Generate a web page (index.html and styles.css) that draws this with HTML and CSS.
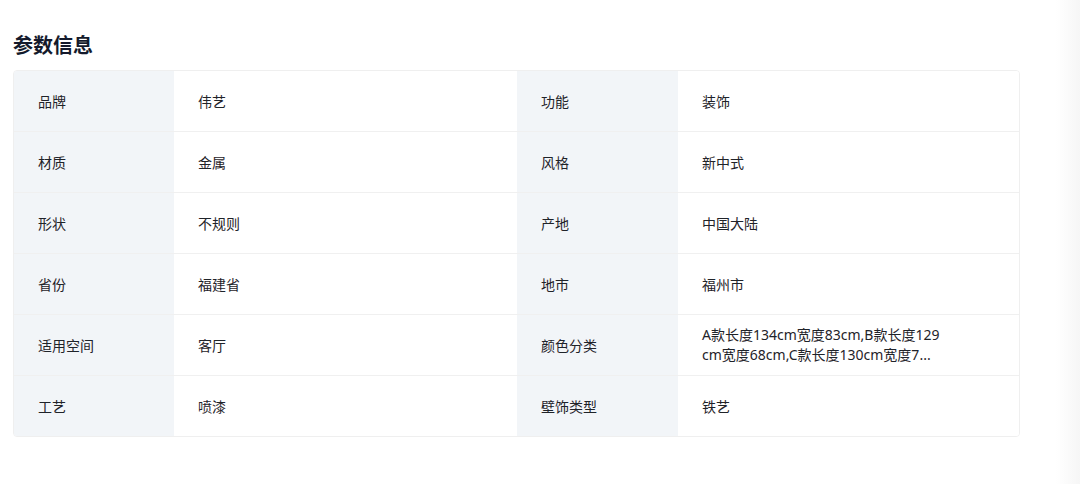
FILE: index.html
```html
<!DOCTYPE html>
<html lang="zh">
<head>
<meta charset="utf-8">
<link rel="stylesheet" href="styles.css">
</head>
<body>
<div class="page">
  <h2 class="title">参数信息</h2>
  <div class="params">
    <div class="row">
      <div class="label">品牌</div><div class="value">伟艺</div>
      <div class="label">功能</div><div class="value">装饰</div>
    </div>
    <div class="row">
      <div class="label">材质</div><div class="value">金属</div>
      <div class="label">风格</div><div class="value">新中式</div>
    </div>
    <div class="row">
      <div class="label">形状</div><div class="value">不规则</div>
      <div class="label">产地</div><div class="value">中国大陆</div>
    </div>
    <div class="row">
      <div class="label">省份</div><div class="value">福建省</div>
      <div class="label">地市</div><div class="value">福州市</div>
    </div>
    <div class="row">
      <div class="label">适用空间</div><div class="value">客厅</div>
      <div class="label">颜色分类</div><div class="value"><span class="clamp">A款长度134cm宽度83cm,B款长度129cm宽度68cm,C款长度130cm宽度7...</span></div>
    </div>
    <div class="row">
      <div class="label">工艺</div><div class="value">喷漆</div>
      <div class="label">壁饰类型</div><div class="value">铁艺</div>
    </div>
  </div>
</div>
</body>
</html>
```

FILE: styles.css
```css
html, body {
  margin: 0;
  padding: 0;
}
body {
  width: 1080px;
  height: 484px;
  background: linear-gradient(to right, #ffffff 0, #ffffff 1056px, #f6f6f6 1080px);
  font-family: "Noto Sans", "Noto Sans CJK SC", sans-serif;
  color: #1f2329;
}
.page {
  width: 1007px;
  padding: 31px 0 0 13px;
}
.title {
  margin: 0 0 11px 0;
  font-size: 20px;
  line-height: 28px;
  font-weight: 700;
  color: #141a2c;
  font-family: "Noto Sans CJK SC", sans-serif;
}
.params {
  border: 1px solid #efefef;
  border-radius: 4px;
  overflow: hidden;
}
.row {
  display: grid;
  grid-template-columns: 160px 343px 161px 1fr;
  height: 60px;
  border-bottom: 1px solid #f0f0f0;
}
.row:last-child {
  border-bottom: none;
}
.label, .value {
  display: flex;
  align-items: center;
  padding: 0 24px;
  font-size: 14px;
  line-height: 20px;
  font-family: "Noto Sans CJK SC", sans-serif;
  color: #1f2329;
}
.label {
  background: #f2f5f8;
}
.value {
  background: #ffffff;
}
.clamp {
  display: block;
  width: 240px;
  word-break: break-all;
  font-family: "Noto Sans", "Noto Sans CJK SC", sans-serif;
  font-size: 14px;
  line-height: 20px;
}
```
